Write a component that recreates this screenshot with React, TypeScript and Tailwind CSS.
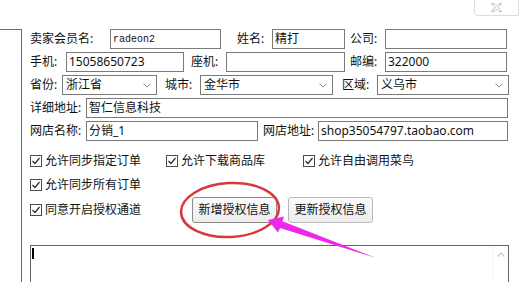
import { ReactNode } from 'react';
import clsx from 'clsx';

const cjk = "font-['Noto_Sans','Noto_Sans_CJK_SC',sans-serif]";

function Label({ children, className }: { children: ReactNode; className?: string }) {
  return <span className={clsx('shrink-0 text-[12px] leading-none text-[#111]', className)}>{children}</span>;
}

function Field({ value, className, mono }: { value?: string; className?: string; mono?: boolean }) {
  return (
    <div
      className={clsx(
        'h-[20px] shrink-0 border border-[#7a7a7a] bg-white flex items-center pl-[2px] text-[#111] whitespace-nowrap overflow-hidden',
        mono ? "font-['Liberation_Mono',monospace] text-[10px]" : 'text-[12px]',
        className
      )}
    >
      {value}
    </div>
  );
}

function Select({ value, className }: { value: string; className?: string }) {
  return (
    <div
      className={clsx(
        'h-[20px] shrink-0 border border-[#7a7a7a] bg-white flex items-center justify-between pl-[3px] pr-[5px] text-[12px] text-[#111]',
        className
      )}
    >
      <span>{value}</span>
      <svg width="8" height="5" viewBox="0 0 8 5">
        <polyline points="0.5,0.5 4,4 7.5,0.5" fill="none" stroke="#8a8a8a" strokeWidth="1" />
      </svg>
    </div>
  );
}

function Check({ label, className }: { label: string; className?: string }) {
  return (
    <div className={clsx('flex items-center shrink-0', className)}>
      <svg width="12" height="12" viewBox="0 0 12 12" className="shrink-0">
        <rect x="0.5" y="0.5" width="11" height="11" fill="white" stroke="#4a4a4a" />
        <polyline points="2.5,6 5,8.5 9.5,3" fill="none" stroke="#2a2a2a" strokeWidth="1.2" />
      </svg>
      <span className="ml-[3px] text-[12px] leading-none text-[#111]">{label}</span>
    </div>
  );
}

function Button({ label, focused }: { label: string; focused?: boolean }) {
  return (
    <div
      className={clsx(
        'w-[85px] h-[26px] shrink-0 rounded-[3px] border flex items-center justify-center text-[12px] text-[#111] bg-gradient-to-b from-[#fbfbfb] to-[#ececec]',
        focused ? 'border-[#8a8a8a]' : 'border-[#b8b8b8]'
      )}
    >
      {label}
    </div>
  );
}

export default function App() {
  return (
    <div className={clsx('relative w-[519px] h-[282px] overflow-hidden bg-white flex', cjk)}>
      {/* left list panel */}
      <div className="w-[22px] shrink-0 pt-[29px]">
        <div className="h-full border-t border-r border-[#6e6e6e]" />
      </div>

      <div className="flex-1 pl-[8px] pt-[29px] flex flex-col">
        <div className="flex flex-col gap-[3px]">
          <div className="h-[20px] flex items-center">
            <Label className="w-[80px]">卖家会员名:</Label>
            <Field value="radeon2" mono className="w-[111px]" />
            <Label className="ml-[16px] w-[35px]">姓名:</Label>
            <Field value="精打" className="w-[73px]" />
            <Label className="ml-[5px] w-[35px]">公司:</Label>
            <Field className="w-[122px]" />
          </div>
          <div className="h-[20px] flex items-center">
            <Label className="w-[36px]">手机:</Label>
            <Field value="15058650723" className="w-[118px]" />
            <Label className="ml-[7px] w-[35px]">座机:</Label>
            <Field className="w-[119px]" />
            <Label className="ml-[5px] w-[35px]">邮编:</Label>
            <Field value="322000" className="w-[122px]" />
          </div>
          <div className="h-[20px] flex items-center">
            <Label className="w-[32px]">省份:</Label>
            <Select value="浙江省" className="w-[95px]" />
            <Label className="ml-[8px] w-[35px]">城市:</Label>
            <Select value="金华市" className="w-[133px]" />
            <Label className="ml-[9px] w-[35px]">区域:</Label>
            <Select value="义乌市" className="w-[132px]" />
          </div>
          <div className="h-[20px] flex items-center">
            <Label className="w-[56px]">详细地址:</Label>
            <Field value="智仁信息科技" className="w-[422px]" />
          </div>
          <div className="h-[20px] flex items-center">
            <Label className="w-[56px]">网店名称:</Label>
            <Field value="分销_1" className="w-[172px]" />
            <Label className="ml-[5px] w-[55px]">网店地址:</Label>
            <Field value="shop35054797.taobao.com" className="w-[190px]" />
          </div>
        </div>

        <div className="mt-[8px] flex flex-col">
          <div className="h-[24px] flex items-center">
            <Check label="允许同步指定订单" className="w-[136px]" />
            <Check label="允许下载商品库" className="w-[137px]" />
            <Check label="允许自由调用菜鸟" />
          </div>
          <div className="h-[24px] flex items-center">
            <Check label="允许同步所有订单" />
          </div>
          <div className="h-[26px] flex items-center">
            <Check label="同意开启授权通道" className="w-[162px]" />
            <Button label="新增授权信息" focused />
            <div className="ml-[11px]">
              <Button label="更新授权信息" />
            </div>
          </div>
        </div>

        <div className="mt-[22px] w-[479px] h-[90px] shrink-0 border border-[#646464] flex">
          <div className="flex-1 pl-[1px] pt-[2px]">
            <div className="w-[2px] h-[11px] bg-black" />
          </div>
          <div className="w-[16px] border-l border-[#f3f3f3] flex justify-center pt-[6px]">
            <svg width="8" height="5" viewBox="0 0 8 5">
              <polyline points="0.5,4.5 4,1 7.5,4.5" fill="none" stroke="#c4c4c4" strokeWidth="1.2" />
            </svg>
          </div>
        </div>
      </div>

      {/* window close button */}
      <div className="absolute right-0 top-[-1px] w-[45px] h-[17px] border border-[#dcdcdc] rounded-bl-[4px] bg-white flex items-center justify-center">
        <svg width="11" height="9" viewBox="0 0 11 9">
          <polygon
            points="0.5,0.5 3,0.5 5.5,3 8,0.5 10.5,0.5 7,4.5 10.5,8.5 8,8.5 5.5,6 3,8.5 0.5,8.5 4,4.5"
            fill="none"
            stroke="#b4b4b4"
            strokeWidth="0.9"
          />
        </svg>
      </div>

      {/* annotation: red circle and pink arrow */}
      <svg className="absolute left-0 top-0 pointer-events-none" width="519" height="282" viewBox="0 0 519 282">
        <ellipse cx="230" cy="210" rx="49" ry="27" fill="none" stroke="#d8383c" strokeWidth="2.5" transform="rotate(-3 230 210)" />
        <polygon
          points="268,220 284,216.5 282.4,221.3 376,258 280,227.9 278,232.5"
          fill="#ec28ec"
        />
      </svg>
    </div>
  );
}
